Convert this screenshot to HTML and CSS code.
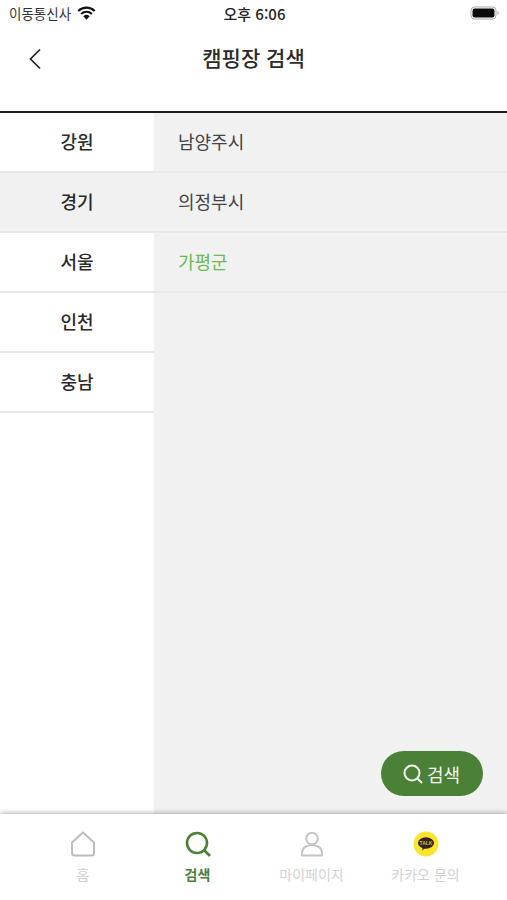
FILE: index.html
```html
<!DOCTYPE html>
<html lang="ko">
<head>
<meta charset="utf-8">
<title>캠핑장 검색</title>
<link rel="stylesheet" href="styles.css">
</head>
<body>
<div class="app">
  <div class="status">
    <div class="status-left">
      <span>이동통신사</span>
      <svg class="wifi" width="19" height="14" viewBox="0 0 18 13"><path d="M9 13 6 9.6a4.4 4.4 0 0 1 6 0z" fill="#111"/><path d="M3.9 7.4a7.4 7.4 0 0 1 10.2 0M1.2 4.5a11.3 11.3 0 0 1 15.600 0" fill="none" stroke="#111" stroke-width="2"/></svg>
    </div>
    <span class="status-time">오후 6:06</span>
    <svg class="battery" width="30" height="14" viewBox="0 0 30 14"><rect x="1" y="1" width="25" height="12" rx="3.5" fill="none" stroke="#aaa" stroke-width="1"/><rect x="2.5" y="2.5" width="22" height="9" rx="2.2" fill="#0a0a0a"/><path d="M27.5 5v4a2 2 0 0 0 1.2-2 2 2 0 0 0-1.2-2z" fill="#aaa"/></svg>
  </div>
  <header class="nav">
    <svg class="back" width="14" height="22" viewBox="0 0 14 22"><path d="M12 1.500 2.500 11 12 20.500" fill="none" stroke="#222" stroke-width="1.700"/></svg>
    <h1 class="title">캠핑장 검색</h1>
  </header>
  <main class="content">
    <ul class="regions">
      <li class="region">강원</li>
      <li class="region region-active">경기</li>
      <li class="region">서울</li>
      <li class="region">인천</li>
      <li class="region">충남</li>
    </ul>
    <div class="cities-pane">
      <ul class="cities">
        <li class="city">남양주시</li>
        <li class="city">의정부시</li>
        <li class="city city-active">가평군</li>
      </ul>
      <button class="search-btn" type="button">
        <svg width="22" height="22" viewBox="0 0 22 22"><circle cx="10" cy="10" r="7.500" fill="none" stroke="#f1f5ee" stroke-width="2"/><path d="m15.500 15.500 4.500 4.500" stroke="#f1f5ee" stroke-width="2"/></svg>
        <span>검색</span>
      </button>
    </div>
  </main>
  <nav class="tabs">
    <div class="tab">
      <svg width="26" height="26" viewBox="0 0 26 26"><path d="M13 1.500 2 11.500V22a2.500 2.500 0 0 0 2.500 2.500h17A2.500 2.500 0 0 0 24 22V11.500z" fill="none" stroke="#bdbdbd" stroke-width="2" stroke-linejoin="round"/></svg>
      <span>홈</span>
    </div>
    <div class="tab tab-active">
      <svg width="26" height="26" viewBox="0 0 26 26"><circle cx="12" cy="12" r="10" fill="none" stroke="#4a8137" stroke-width="2.600"/><path d="m19.500 19.500 5.500 5.500" stroke="#4a8137" stroke-width="2.600"/></svg>
      <span>검색</span>
    </div>
    <div class="tab">
      <svg width="26" height="26" viewBox="0 0 26 26"><circle cx="13" cy="7.500" r="5.800" fill="none" stroke="#c4c4c4" stroke-width="2"/><path d="M3 24.500v-2.500c0-4.500 4-8 10-8s10 3.500 10 8v2.500z" fill="none" stroke="#c4c4c4" stroke-width="2" stroke-linejoin="round"/></svg>
      <span>마이페이지</span>
    </div>
    <div class="tab">
      <svg width="26" height="26" viewBox="0 0 26 26"><circle cx="13" cy="13" r="12.500" fill="#fde52d"/><ellipse cx="13" cy="12" rx="8" ry="5.800" fill="#33231c"/><path d="m10 16-1 3.500 4-3z" fill="#33231c"/><text class="talk" x="13" y="13.800" text-anchor="middle">TALK</text></svg>
      <span>카카오 문의</span>
    </div>
  </nav>
</div>
</body>
</html>
```
FILE: styles.css
```css
* { box-sizing: border-box; }
html, body { margin: 0; padding: 0; }
body {
  width: 507px;
  height: 900px;
  overflow: hidden;
  background: #fff;
  font-family: "Noto Sans CJK KR", "Noto Sans", sans-serif;
  color: #222;
}
ul { list-style: none; margin: 0; padding: 0; }
.app { display: flex; flex-direction: column; height: 900px; }

.status {
  height: 28px;
  padding: 0 7px 2px 9px;
  display: grid;
  grid-template-columns: 1fr auto 1fr;
  align-items: center;
  font-size: 13.5px;
  color: #333;
}
.status-left { display: flex; align-items: center; gap: 6px; }
.status-time { font-size: 15px; font-weight: 500; color: #222; }
.battery { justify-self: end; }

.nav {
  height: 85px;
  display: flex;
  justify-content: center;
  padding-top: 13px;
  position: relative;
  border-bottom: 2px solid #1c1c1c;
}
.back { position: absolute; left: 28px; top: 20px; }
.title { margin: 0; font-size: 21px; line-height: 32px; font-weight: 500; color: #2a2a2a; }

.content { flex: 1; display: flex; min-height: 0; }
.regions { width: 154px; }
.region {
  height: 60px;
  padding-bottom: 2px;
  border-bottom: 2px solid #e8e8e8;
  display: flex;
  align-items: center;
  justify-content: center;
  font-size: 18px;
  font-weight: 500;
  color: #2a2a2a;
}
.region-active { background: #f1f1f1; }

.cities-pane { flex: 1; background: #f1f1f1; position: relative; }
.city {
  height: 60px;
  padding: 0 0 2px 24px;
  border-bottom: 2px solid #e8e8e8;
  display: flex;
  align-items: center;
  font-size: 18px;
  color: #444;
}
.city-active { color: #6dba4d; }

.search-btn {
  position: absolute;
  right: 24px;
  bottom: 18px;
  width: 102px;
  height: 45px;
  border: 0;
  border-radius: 23px;
  background: #4a8137;
  color: #f4f7f2;
  display: flex;
  align-items: center;
  justify-content: center;
  gap: 3px;
  font-family: inherit;
  font-size: 18px;
  padding: 0 2px 0 0;
}

.tabs {
  height: 86px;
  display: grid;
  grid-template-columns: 114px 115px 113px 115px;
  padding: 4px 0 0 26px;
  background: #fff;
  box-shadow: 0 -1px 5px rgba(0, 0, 0, 0.3);
  position: relative;
}
.tab {
  display: flex;
  flex-direction: column;
  align-items: center;
  gap: 7px;
  padding-top: 13px;
  font-size: 14px;
  line-height: 20px;
  color: #d2d2d2;
}
.tab svg { display: block; }
.tab-active { color: #4a8137; font-weight: 700; }
.talk { font-family: "Liberation Sans", sans-serif; font-size: 5px; font-weight: 700; fill: #d9b53a; }
```
